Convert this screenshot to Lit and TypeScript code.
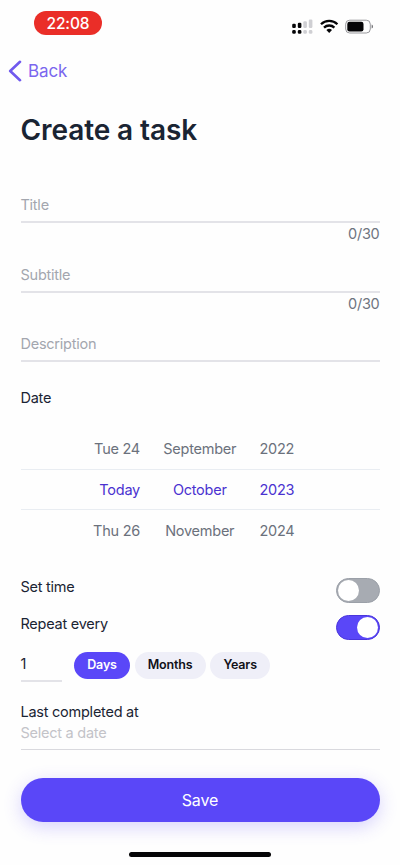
import { LitElement, html, css } from "lit";
import { customElement, property } from "lit/decorators.js";
import { classMap } from "lit/directives/class-map.js";

@customElement("status-bar")
class StatusBar extends LitElement {
  static styles = css`
    :host {
      display: flex;
      justify-content: space-between;
      height: 35px;
      padding: 11px 27px 0 34px;
      box-sizing: border-box;
    }
    .time {
      width: 68px;
      height: 24px;
      border-radius: 12px;
      background: #ea2e28;
      color: #fff;
      font-size: 15.5px;
      font-weight: 500;
      letter-spacing: -0.1px;
      line-height: 25px;
      text-align: center;
    }
    svg {
      display: block;
      width: 82px;
      height: 20px;
      margin-top: 5px;
    }
  `;
  render() {
    return html`
      <div class="time">22:08</div>
      <svg viewBox="0 0 82 20">
        <g fill="#050507">
          <rect x="1.2" y="7.8" width="3.6" height="4.2" rx="1.2" />
          <rect x="6.8" y="6.8" width="3.6" height="5.2" rx="1.2" />
          <rect x="1.2" y="14" width="3.6" height="3.8" rx="1.4" />
          <rect x="6.8" y="14" width="3.6" height="3.8" rx="1.4" />
        </g>
        <g fill="#cfcfd3">
          <rect x="12.3" y="5.2" width="3.6" height="6.8" rx="1.2" />
          <rect x="17.8" y="3.6" width="3.6" height="8.4" rx="1.2" />
          <rect x="12.3" y="14" width="3.6" height="3.8" rx="1.4" />
          <rect x="17.8" y="14" width="3.6" height="3.8" rx="1.4" />
        </g>
        <g fill="none" stroke="#050507" stroke-width="2.3">
          <path d="M30 8.3a11.7 11.7 0 0 1 16.4 0" />
          <path d="M33 11.6a7.5 7.5 0 0 1 10.4 0" />
        </g>
        <path d="M35.4 13.9a4.3 4.3 0 0 1 5.6 0L38.2 16.9z" fill="#050507" />
        <rect x="54.7" y="4.2" width="24.6" height="12.8" rx="4" fill="none" stroke="#98989c" />
        <rect x="56.3" y="5.8" width="16.2" height="9.6" rx="2.2" fill="#050507" />
        <path d="M80.6 8.6q1.5.7 1.5 2t-1.5 2z" fill="#77777b" />
      </svg>
    `;
  }
}

@customElement("toggle-switch")
class ToggleSwitch extends LitElement {
  @property({ type: Boolean }) on = false;
  static styles = css`
    .track {
      display: flex;
      box-sizing: border-box;
      width: 43.5px;
      height: 25px;
      padding: 1px;
      border: 1px solid #9ba0a8;
      border-radius: 13px;
      background: #a7abb2;
    }
    .track.on {
      justify-content: flex-end;
      border-color: #4a35dc;
      background: #5a47f8;
    }
    .knob {
      width: 21px;
      height: 21px;
      border-radius: 50%;
      background: #fff;
    }
  `;
  render() {
    return html`<div class=${classMap({ track: true, on: this.on })}><div class="knob"></div></div>`;
  }
}

@customElement("app-root")
class AppRoot extends LitElement {
  static styles = css`
    :host {
      display: flex;
      flex-direction: column;
      box-sizing: border-box;
      height: 865px;
      overflow: hidden;
      background: #fefefe;
      color: #1a2433;
      font-family: Inter, "Liberation Sans", sans-serif;
      font-size: 14.5px;
      letter-spacing: -0.25px;
      line-height: 20px;
      white-space: nowrap;
    }
    .back {
      display: flex;
      align-items: center;
      gap: 6px;
      height: 24px;
      margin-top: 24px;
      padding-left: 8px;
      color: #7a66ee;
      font-size: 17px;
      letter-spacing: -0.1px;
    }
    .back svg {
      width: 14px;
      height: 22px;
    }
    main {
      display: flex;
      flex-direction: column;
      padding: 0 20.5px;
    }
    h1 {
      margin: 29px 0 0;
      font-size: 28px;
      font-weight: 600;
      letter-spacing: -0.1px;
      line-height: 36px;
    }
    .fields {
      display: grid;
      grid-auto-rows: 69.6px;
      height: 193.5px;
      margin-top: 46px;
    }
    .input {
      height: 27px;
      border-bottom: 2px solid #e3e3e8;
      color: #a3a6ae;
      line-height: 21px;
    }
    .count {
      color: #6e7480;
      line-height: 21px;
      text-align: right;
    }
    .picker {
      display: grid;
      grid-template-rows: 41px 41px 41px;
      margin: 20.5px 0 0;
      color: #6b717c;
      letter-spacing: -0.25px;
    }
    .row {
      display: grid;
      grid-template-columns: 119.5px 119.5px 1fr;
      align-items: center;
    }
    .row.current {
      box-sizing: border-box;
      border-top: 1px solid #e9edf2;
      border-bottom: 1px solid #e9edf2;
      color: #4a32d0;
    }
    .day {
      text-align: right;
    }
    .month {
      text-align: center;
    }
    .option {
      display: flex;
      justify-content: space-between;
      height: 37px;
    }
    .picker + .option {
      margin-top: 27px;
    }
    .option span {
      line-height: 18px;
    }
    .repeat {
      display: flex;
      gap: 4.5px;
      height: 30px;
    }
    .number {
      width: 41px;
      height: 28px;
      margin-right: 8px;
      border-bottom: 2px solid #e3e3e8;
      line-height: 24px;
    }
    .chip {
      height: 26.5px;
      border-radius: 14px;
      padding: 0 13.2px;
      background: #efeff8;
      color: #111118;
      font-size: 12.5px;
      font-weight: 600;
      letter-spacing: -0.15px;
      line-height: 26px;
    }
    .chip.selected {
      background: #5a47f8;
      color: #fff;
    }
    .last {
      margin-top: 20px;
    }
    .placeholder {
      height: 27px;
      border-bottom: 1px solid #d9d9de;
      color: #c3c3c8;
      line-height: 21px;
    }
    .save {
      height: 44px;
      margin-top: 28px;
      border-radius: 22px;
      background: #5a47f8;
      box-shadow: 0 5px 18px rgba(90, 71, 248, 0.24);
      color: #fff;
      font-size: 16px;
      letter-spacing: -0.1px;
      line-height: 44px;
      text-align: center;
    }
    .home {
      width: 142px;
      height: 5px;
      margin: 30px auto 0;
      border-radius: 3px;
      background: #050507;
    }
  `;
  private fields = [
    { name: "Title", limit: 30 },
    { name: "Subtitle", limit: 30 },
    { name: "Description", limit: 0 },
  ];
  private dates = [
    ["Tue 24", "September", "2022"],
    ["Today", "October", "2023"],
    ["Thu 26", "November", "2024"],
  ];
  render() {
    return html`
      <status-bar></status-bar>
      <div class="back">
        <svg viewBox="0 0 14 22">
          <path d="M12 1.8L2.2 11L12 20.2" fill="none" stroke="#7059ee" stroke-width="2.6" stroke-linecap="round" stroke-linejoin="round" />
        </svg>
        <span>Back</span>
      </div>
      <main>
        <h1>Create a task</h1>
        <div class="fields">
          ${this.fields.map(
            (f) => html`<div>
              <div class="input">${f.name}</div>
              ${f.limit ? html`<div class="count">0/${f.limit}</div>` : ""}
            </div>`
          )}
        </div>
        <div>Date</div>
        <div class="picker">
          ${this.dates.map(
            ([d, m, y], i) => html`<div class=${classMap({ row: true, current: i === 1 })}>
              <span class="day">${d}</span><span class="month">${m}</span><span>${y}</span>
            </div>`
          )}
        </div>
        <div class="option"><span>Set time</span><toggle-switch></toggle-switch></div>
        <div class="option"><span>Repeat every</span><toggle-switch on></toggle-switch></div>
        <div class="repeat">
          <div class="number">1</div>
          <div class="chip selected">Days</div>
          <div class="chip">Months</div>
          <div class="chip">Years</div>
        </div>
        <div class="last">Last completed at</div>
        <div class="placeholder">Select a date</div>
        <div class="save">Save</div>
      </main>
      <div class="home"></div>
    `;
  }
}
